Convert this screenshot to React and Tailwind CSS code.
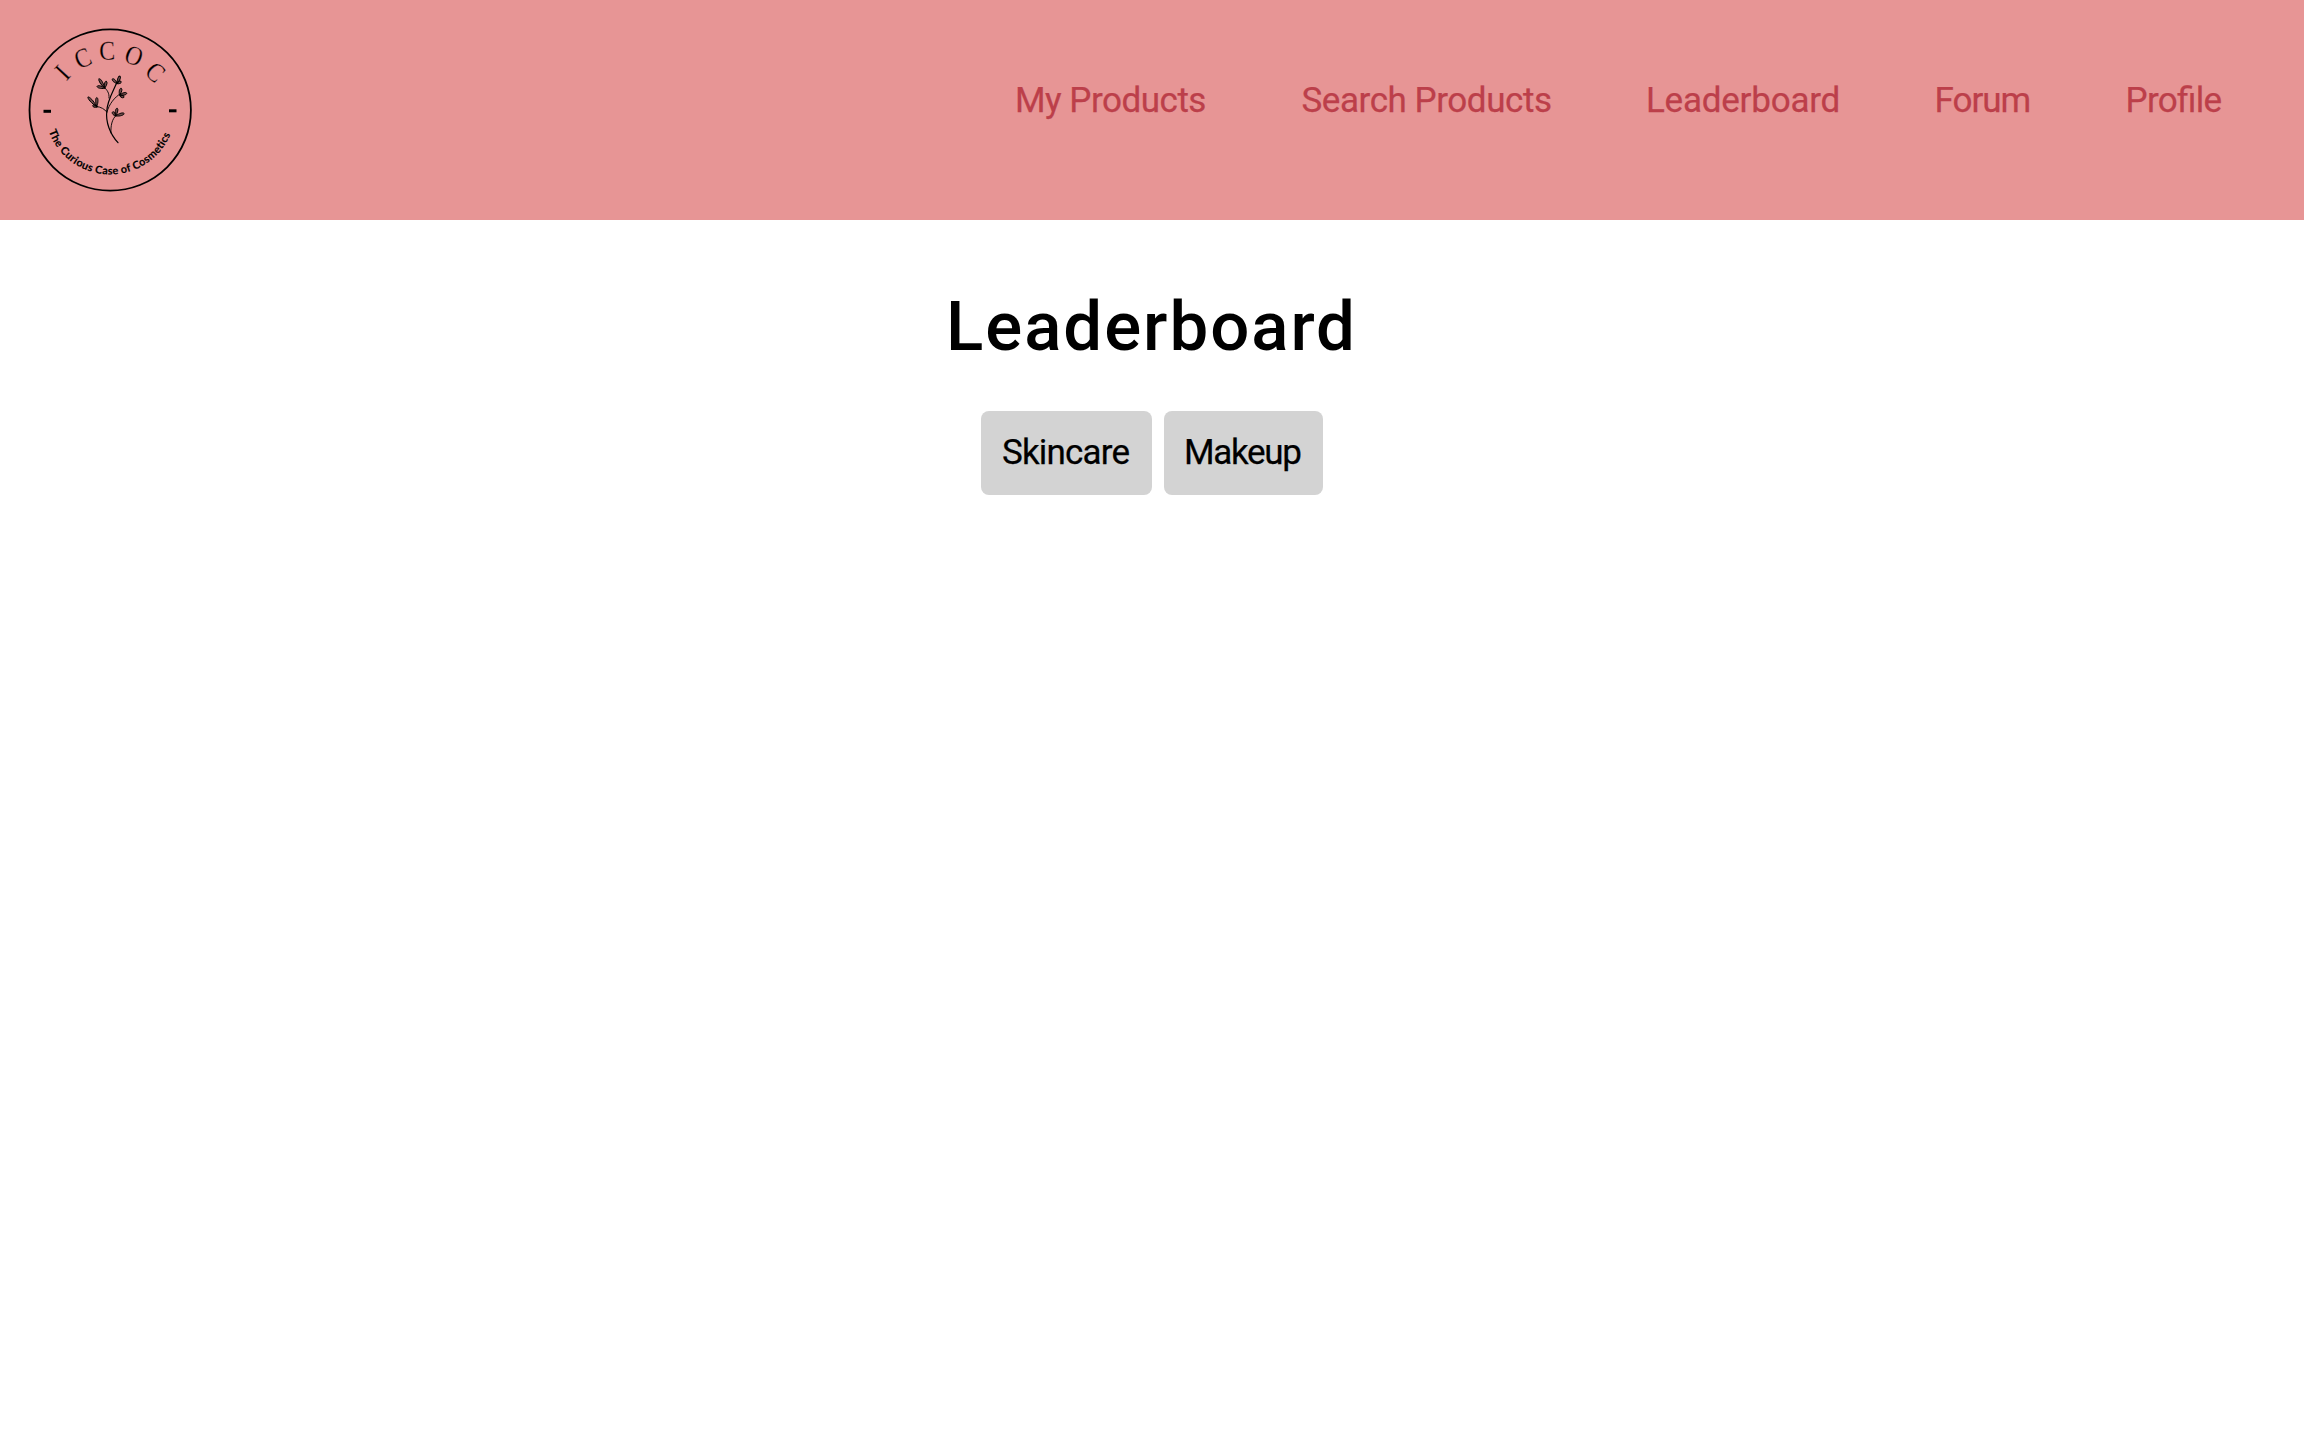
import React from "react";

const links = [
  { label: "My Products", style: "w-[190.5px] tracking-[-0.48px]" },
  { label: "Search Products", style: "w-[248.5px] tracking-[-0.44px]" },
  { label: "Leaderboard", style: "w-[192.5px] tracking-[-0.23px]" },
  { label: "Forum", style: "w-[95px] tracking-[-1px]" },
  { label: "Profile", style: "w-[96px] tracking-[-0.7px]" },
];

const arcLetters = [
  { ch: "I", x: 62.6, y: 72.6, r: -47 },
  { ch: "C", x: 82.8, y: 58.3, r: -23 },
  { ch: "C", x: 107, y: 51, r: -2 },
  { ch: "O", x: 133.8, y: 55.8, r: 21 },
  { ch: "C", x: 155.4, y: 72.2, r: 42 },
];

const leaves = [
  { x: 97, y: 107, r: -42, l: 13.5 },
  { x: 96.8, y: 106.5, r: 0, l: 9 },
  { x: 97.5, y: 107, r: -72, l: 5 },
  { x: 104.8, y: 88, r: -32, l: 11 },
  { x: 104.8, y: 88, r: 12, l: 7 },
  { x: 104.8, y: 88.3, r: -76, l: 8 },
  { x: 117, y: 83.5, r: 22, l: 8 },
  { x: 117, y: 83.5, r: -45, l: 6.5 },
  { x: 117, y: 83.5, r: 65, l: 4.5 },
  { x: 119.5, y: 95, r: 14, l: 7 },
  { x: 119.5, y: 95, r: 76, l: 7.5 },
  { x: 119.5, y: 95, r: 118, l: 5 },
  { x: 115.5, y: 116, r: 12, l: 8 },
  { x: 115.5, y: 116, r: -35, l: 5 },
  { x: 115.5, y: 116, r: 74, l: 9 },
];

function Leaf({ x, y, r, l }) {
  return (
    <path
      transform={`translate(${x} ${y}) rotate(${r})`}
      d={`M0 0C-1.7 ${-l * 0.5} -1.5 ${-l * 0.95} 0 ${-l}C1.5 ${-l * 0.95} 1.7 ${-l * 0.5} 0 0Z`}
      fill="#000"
      fillOpacity="0.5"
      stroke="#000"
      strokeWidth="0.9"
    />
  );
}

function Logo() {
  return (
    <svg className="size-[220px] shrink-0" viewBox="0 0 220 220" fill="none" role="img" aria-label="ICCOC">
      <circle cx="110.2" cy="110" r="80.7" stroke="#000" strokeWidth="1.8" />
      {arcLetters.map((a, i) => (
        <g key={i} transform={`translate(${a.x} ${a.y}) rotate(${a.r}) scale(0.88 1)`}>
          <text
            y="8.8"
            textAnchor="middle"
            fill="#000"
            stroke="#e79595"
            strokeWidth="0.25"
            fontFamily="Liberation Serif, serif"
            fontSize="27"
          >
            {a.ch}
          </text>
        </g>
      ))}
      <rect x="43.5" y="109.8" width="7.5" height="3" fill="#000" />
      <rect x="169" y="109.3" width="7.5" height="3" fill="#000" />

      <g stroke="#000" strokeLinecap="round">
        <path d="M118 142.7C110 134 105.5 122 106.8 111C107.3 100 114 90 117 82" strokeWidth="1.2" />
        <path d="M107 112C109 104 115 97 120 94" strokeWidth="0.9" />
        <path d="M106.8 112C104.5 109 101 107 96.5 106.5" strokeWidth="0.9" />
        <path d="M109 98C109.5 93 107 90 104.5 87.5" strokeWidth="0.9" />
        <path d="M111 133C110.5 126 112 119 116 115.5" strokeWidth="0.9" />
      </g>
      {leaves.map((leaf, i) => (
        <Leaf key={i} {...leaf} />
      ))}

      <path id="motto-arc" d="M48.8 131.3A65.3 65.3 0 0 0 174.4 121.3" />
      <text
        className="[font-variant-ligatures:none]"
        fill="#000"
        stroke="#000"
        strokeWidth="0.15"
        fontFamily="Lato, sans-serif"
        fontWeight="700"
        fontSize="10.8"
        textLength="156.5"
        lengthAdjust="spacing"
      >
        <textPath href="#motto-arc">The Curious Case of Cosmetics</textPath>
      </text>
    </svg>
  );
}

export default function App() {
  return (
    <div className="min-h-screen bg-white font-['Roboto',sans-serif] text-black">
      <header className="flex h-[220px] items-start justify-between bg-[#e79595]">
        <Logo />
        <nav className="flex gap-24 pt-[81px] pr-[82.5px]">
          {links.map((l) => (
            <a
              key={l.label}
              href="#"
              className={`block text-[35px] leading-10 whitespace-nowrap text-[#bc3f4a] [-webkit-text-stroke:0.25px_#bc3f4a] [font-feature-settings:'liga'_1] ${l.style}`}
            >
              {l.label}
            </a>
          ))}
        </nav>
      </header>
      <main className="flex flex-col items-center pt-[67px]">
        <h1 className="mr-[1px] text-[69px] leading-20 font-medium tracking-[1.95px]">Leaderboard</h1>
        <div className="mt-[44px] flex gap-3 text-[35px] leading-10 whitespace-nowrap [-webkit-text-stroke:0.25px_#000]">
          <button className="h-[84px] w-[171px] rounded-lg bg-[#d3d3d3] pt-[22px] pb-[22px] pl-[21px] text-left tracking-[-0.83px]">
            Skincare
          </button>
          <button className="h-[84px] w-[159px] rounded-lg bg-[#d3d3d3] pt-[22px] pb-[22px] pl-5 text-left tracking-[-1.3px]">
            Makeup
          </button>
        </div>
      </main>
    </div>
  );
}
